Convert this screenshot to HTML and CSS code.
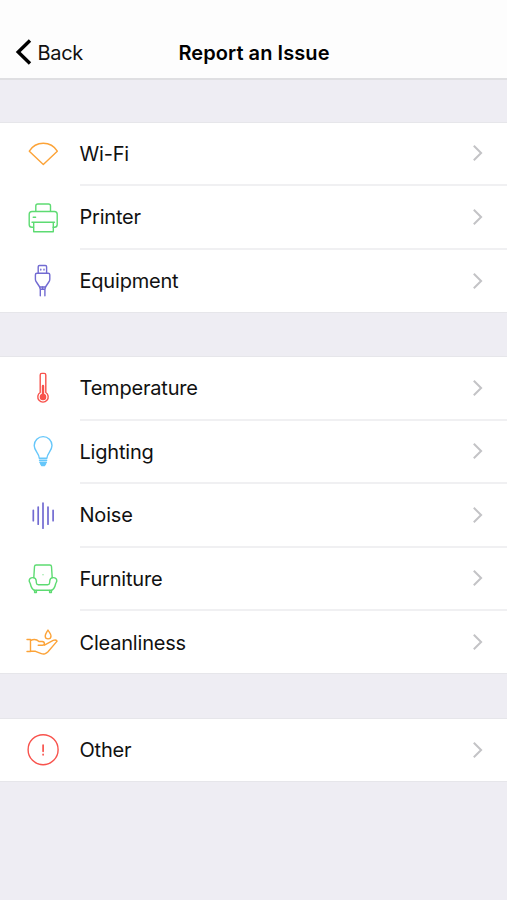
FILE: index.html
```html
<!DOCTYPE html>
<html lang="en">

<head>
    <meta charset="UTF-8">
    <meta name="viewport" content="width=device-width, initial-scale=1.0">
    <title>Report an Issue</title>
    <link rel="stylesheet" href="styles.css">
</head>

<body>
    <header class="navbar">
        <a class="back">
            <svg class="back-arrow" viewBox="0 0 18 28"><path d="M15 2.5 3.2 14 15 25.5"/></svg>
            <span class="back-text">Back</span>
        </a>
        <h1 class="title">Report an Issue</h1>
    </header>

    <main>
        <ul class="group">
            <li class="row">
                <svg class="icon orange" viewBox="0 0 40 40">
                    <path d="M6.3 17.2C9.5 12 14 9.3 20.3 9.3s10.8 2.7 14 7.9L20.3 30.6z"/>
                </svg>
                <div class="cell"><span class="label">Wi-Fi</span><svg class="chevron" viewBox="0 0 10 18"><path d="M1.3 1.8 8.6 9 1.3 16.2"/></svg></div>
            </li>
            <li class="row">
                <svg class="icon green" viewBox="0 0 40 40">
                    <path d="M12.8 13.3V8q0-2 2-2h10.7q2 0 2 2v5.3"/>
                    <path d="M10.5 29.3H9q-2.8 0-2.8-2.8V16.3q0-2.8 2.8-2.8h22.4q2.8 0 2.8 2.8v10.2q0 2.8-2.8 2.8h-1.3"/>
                    <path d="M9 24.3h22.5M10.7 24.3V33.7h19.6v-9.4M10.2 19.3h2.4"/>
                </svg>
                <div class="cell"><span class="label">Printer</span><svg class="chevron" viewBox="0 0 10 18"><path d="M1.3 1.8 8.6 9 1.3 16.2"/></svg></div>
            </li>
            <li class="row">
                <svg class="icon purple" viewBox="0 0 40 40">
                    <path d="M15.2 12V5.8q0-1.3 1.3-1.3h5.8q1.3 0 1.3 1.3V12M17.8 8.3v.8M21 8.3v.8"/>
                    <path d="M14 12.2h11.2q1.6 0 1.6 1.6v4.4q0 1.6-1 2.8L22.5 26h-5.8L13.4 21q-1-1.2-1-2.8v-4.4q0-1.6 1.6-1.6z"/>
                    <path d="M16.7 26l.6 2.5V34.8M22.5 26l-.6 2.5V34.8M17.5 28.3h4.4M19.6 26v2"/>
                </svg>
                <div class="cell"><span class="label">Equipment</span><svg class="chevron" viewBox="0 0 10 18"><path d="M1.3 1.8 8.6 9 1.3 16.2"/></svg></div>
            </li>
        </ul>

        <ul class="group">
            <li class="row">
                <svg class="icon red" viewBox="0 0 40 40">
                    <path d="M17.2 23.5V6q0-1.6 1.6-1.6h2.4q1.6 0 1.6 1.6V23.5A5.2 5.2 0 1 1 17.2 23.5z"/>
                    <path d="M20 17v10" stroke-width="2.4"/>
                    <circle class="solid" cx="20" cy="28" r="2.6"/>
                </svg>
                <div class="cell"><span class="label">Temperature</span><svg class="chevron" viewBox="0 0 10 18"><path d="M1.3 1.8 8.6 9 1.3 16.2"/></svg></div>
            </li>
            <li class="row">
                <svg class="icon blue" viewBox="0 0 40 40">
                    <path d="M16.3 26.2C16 21 11.2 19 11.2 13.5a8.9 8.9 0 0 1 17.8 0C29 19 24.2 21 23.9 26.2z"/>
                    <path d="M16.5 28.2h7.2M16.8 30.2h6.6"/>
                    <path class="solid" d="M17.5 31.5h5.2l-1.3 2h-2.6z"/>
                </svg>
                <div class="cell"><span class="label">Lighting</span><svg class="chevron" viewBox="0 0 10 18"><path d="M1.3 1.8 8.6 9 1.3 16.2"/></svg></div>
            </li>
            <li class="row">
                <svg class="icon purple wave" viewBox="0 0 40 40">
                    <path d="M10.3 14.3v10.4M15.2 11v17.2M20 7v25.2M25 11v17.2M30.1 14.3v10.4"/>
                </svg>
                <div class="cell"><span class="label">Noise</span><svg class="chevron" viewBox="0 0 10 18"><path d="M1.3 1.8 8.6 9 1.3 16.2"/></svg></div>
            </li>
            <li class="row">
                <svg class="icon green" viewBox="0 0 40 40">
                    <path d="M10.8 18.5 11.5 7.5q.1-1.5 1.7-1.5h13.6q1.6 0 1.7 1.5l.7 11"/>
                    <path d="M6.2 21.8C6.2 19.9 7.8 18.6 9.9 18.6c2 0 3.2 1.3 3.3 3.2l.2 2.2q.1 1.8 1.9 1.8h9.4q1.8 0 1.9-1.8l.2-2.2c.1-1.9 1.3-3.2 3.3-3.2 2.1 0 3.7 1.3 3.7 3.2 0 1.2-.9 1.9-1.2 3.2C31.8 29 30.5 31.3 27.5 31.3h-15C9.5 31.3 8.2 29 7.4 25c-.3-1.3-1.2-2-1.2-3.2z"/>
                    <path d="M11.6 31.5v2h1.8v-2M26.6 31.5v2h1.8v-2"/>
                    <path d="M20 15.6v.3" stroke-width="1"/>
                </svg>
                <div class="cell"><span class="label">Furniture</span><svg class="chevron" viewBox="0 0 10 18"><path d="M1.3 1.8 8.6 9 1.3 16.2"/></svg></div>
            </li>
            <li class="row">
                <svg class="icon orange" viewBox="0 0 40 40">
                    <path d="M25 8c1.2 2.3 3 4 3 6a2.9 2.9 0 0 1-5.8 0c0-2 1.6-3.7 2.8-6z"/>
                    <path d="M4 17.5h3.5v12H4M7.5 18.5C11 16.8 13.5 17 16 19.500h3.200q2.200.2 2.200 2.200 0 1.500-2 1.500h-4.200M21.400 23.200l8.800-4.800c1.500-.7 3.200-.3 3.900.7L25 29.800q-1.200 1.300-3.200 2-1.700.5-3.500-.2L12.500 29.300h-5"/>
                </svg>
                <div class="cell"><span class="label">Cleanliness</span><svg class="chevron" viewBox="0 0 10 18"><path d="M1.3 1.8 8.6 9 1.3 16.2"/></svg></div>
            </li>
        </ul>

        <ul class="group">
            <li class="row">
                <svg class="icon red" viewBox="0 0 40 40">
                    <circle cx="20.1" cy="19.7" r="15"/>
                    <path d="M20.1 15v6.3M20.1 24.3v.5" stroke-width="1.7"/>
                </svg>
                <div class="cell"><span class="label">Other</span><svg class="chevron" viewBox="0 0 10 18"><path d="M1.3 1.8 8.6 9 1.3 16.2"/></svg></div>
            </li>
        </ul>
    </main>
</body>

</html>
```
FILE: styles.css
```css
* {
    box-sizing: border-box;
}

body {
    margin: 0;
    min-height: 100vh;
    background-color: #eeedf3;
    font-family: Inter, "Liberation Sans", sans-serif;
    font-size: 20px;
    letter-spacing: -0.2px;
    color: #111;
}

.navbar {
    display: grid;
    grid-template-columns: 1fr auto 1fr;
    align-items: center;
    height: 80px;
    padding: 25px 14px 0 15px;
    background-color: #fdfdfd;
    border-bottom: 2px solid #dfdfe2;
}

.back {
    display: flex;
    align-items: center;
    gap: 4.5px;
}

.back-arrow {
    width: 18px;
    height: 28px;
    fill: none;
    stroke: #000;
    stroke-width: 3.4;
}

.back-text {
    padding-top: 2px;
    letter-spacing: -0.3px;
}

.title {
    margin: 0;
    padding-top: 2px;
    font-size: 20px;
    font-weight: 600;
    letter-spacing: 0.07px;
    color: #000;
}

.group {
    margin: 42.5px 0 0;
    padding: 0;
    list-style: none;
    background-color: #fff;
    box-shadow: 0 0 0 1px #e6e6ea;
}

.group + .group {
    margin-top: 45.5px;
}

.row {
    display: flex;
    align-items: center;
    height: 63.5px;
    padding-left: 23px;
}

.row:last-child {
    height: 62px;
}

.icon {
    flex: none;
    width: 40px;
    height: 40px;
    margin-right: 17px;
    fill: none;
    stroke: currentColor;
    stroke-width: 1.4;
    stroke-linecap: round;
    stroke-linejoin: round;
}

.icon .solid {
    fill: currentColor;
}

.wave {
    stroke-width: 1.7;
}

.orange {
    color: #fca338;
}

.green {
    color: #5ddb72;
}

.purple {
    color: #726bd2;
}

.red {
    color: #f8524c;
}

.blue {
    color: #66c7fa;
}

.cell {
    display: flex;
    flex: 1;
    align-items: center;
    justify-content: space-between;
    height: 100%;
    padding-right: 24px;
    border-bottom: 2px solid #f0f0f2;
}

.row:last-child .cell {
    border-bottom: none;
}

.label {
    padding-top: 1px;
    margin-left: -0.5px;
}

.chevron {
    width: 11px;
    height: 18px;
    fill: none;
    stroke: #c3c3c6;
    stroke-width: 2;
}
```
